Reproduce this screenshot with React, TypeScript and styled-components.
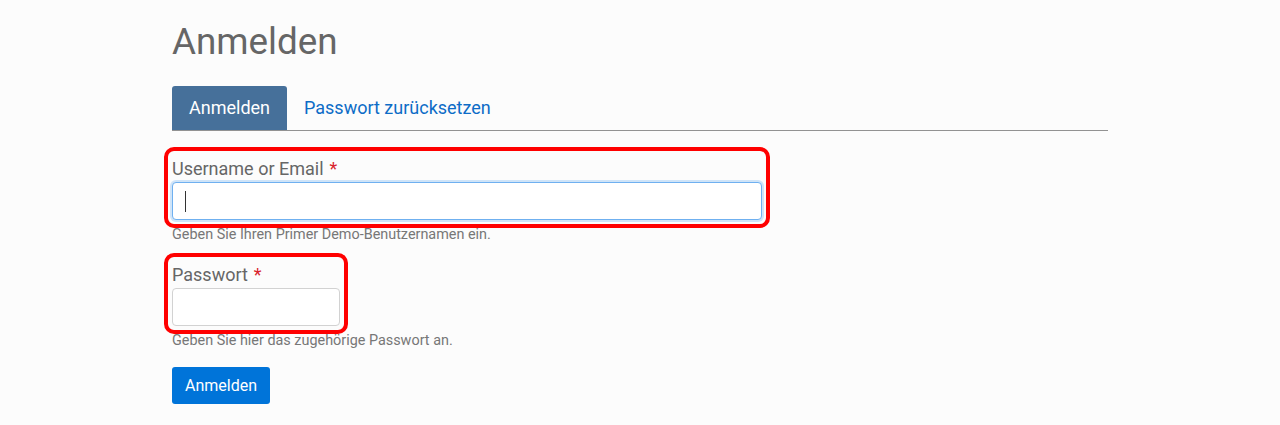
import React from "react";
import styled, { createGlobalStyle } from "styled-components";

const Global = createGlobalStyle`
  html, body { margin: 0; padding: 0; background: #fcfcfc; }
  body { font-family: Roboto, "Liberation Sans", Arial, sans-serif; color: #666; }
  * { box-sizing: border-box; }
`;

const Page = styled.div`
  width: 936px;
  margin: 0 auto;
  padding-top: 20px;
`;

const Title = styled.h1`
  margin: 0 0 22px;
  font-size: 36.8px;
  line-height: 44px;
  font-weight: 400;
  color: #666;
`;

const Tabs = styled.div`
  display: flex;
  border-bottom: 1px solid #929292;
  margin-bottom: 24px;
`;

const Tab = styled.a<{ $active?: boolean }>`
  display: block;
  height: 44px;
  padding: 0 17px;
  line-height: 44px;
  font-size: 18px;
  text-decoration: none;
  border-radius: 3px 3px 0 0;
  background: ${(p) => (p.$active ? "#46709a" : "transparent")};
  color: ${(p) => (p.$active ? "#fff" : "#0d6cc7")};
`;

const Form = styled.form`
  display: flex;
  flex-direction: column;
  align-items: flex-start;
`;

const FieldGroup = styled.div<{ $width: number }>`
  width: ${(p) => p.$width}px;
  display: flex;
  flex-direction: column;
  outline: 4px solid #ff0000;
  outline-offset: 4px;
  border-radius: 2px;
`;

const Label = styled.label`
  font-size: 18px;
  line-height: 27px;
  margin-bottom: 0;
  color: #666;
`;

const Required = styled.span`
  color: #d9232d;
  margin-left: 6px;
`;

const InputWrap = styled.div`
  position: relative;
`;

const Input = styled.input<{ $focused?: boolean }>`
  display: block;
  width: 100%;
  height: 38px;
  padding: 0 12px;
  font-size: 16px;
  font-family: inherit;
  background: #fff;
  border-radius: 4px;
  border: 1px solid ${(p) => (p.$focused ? "#6fb0f0" : "#d2d2d2")};
  box-shadow: ${(p) => (p.$focused ? "0 0 0 2px #cfe4f8" : "none")};
  outline: none;
`;

const Caret = styled.span`
  position: absolute;
  left: 13px;
  top: 9px;
  width: 1px;
  height: 21px;
  background: #333;
`;

const Help = styled.div`
  font-size: 14.4px;
  line-height: 18px;
  margin-top: 6px;
  color: #777;
`;

const Spacer = styled.div<{ $h: number }>`
  height: ${(p) => p.$h}px;
`;

const Button = styled.button`
  height: 37px;
  padding: 0 13px;
  background: #0074d9;
  color: #fff;
  font-family: inherit;
  font-size: 16px;
  border: none;
  border-radius: 3px;
`;

export default function App() {
  return (
    <>
      <Global />
      <Page>
        <Title>Anmelden</Title>
        <Tabs>
          <Tab $active href="#">Anmelden</Tab>
          <Tab href="#">Passwort zurücksetzen</Tab>
        </Tabs>
        <Form onSubmit={(e) => e.preventDefault()}>
          <FieldGroup $width={590}>
            <Label>
              Username or Email<Required>*</Required>
            </Label>
            <InputWrap>
              <Input $focused type="text" />
              <Caret />
            </InputWrap>
          </FieldGroup>
          <Help>Geben Sie Ihren Primer Demo-Benutzernamen ein.</Help>
          <Spacer $h={17} />
          <FieldGroup $width={168}>
            <Label>
              Passwort<Required>*</Required>
            </Label>
            <Input type="password" />
          </FieldGroup>
          <Help>Geben Sie hier das zugehörige Passwort an.</Help>
          <Spacer $h={17} />
          <Button type="submit">Anmelden</Button>
        </Form>
      </Page>
    </>
  );
}
